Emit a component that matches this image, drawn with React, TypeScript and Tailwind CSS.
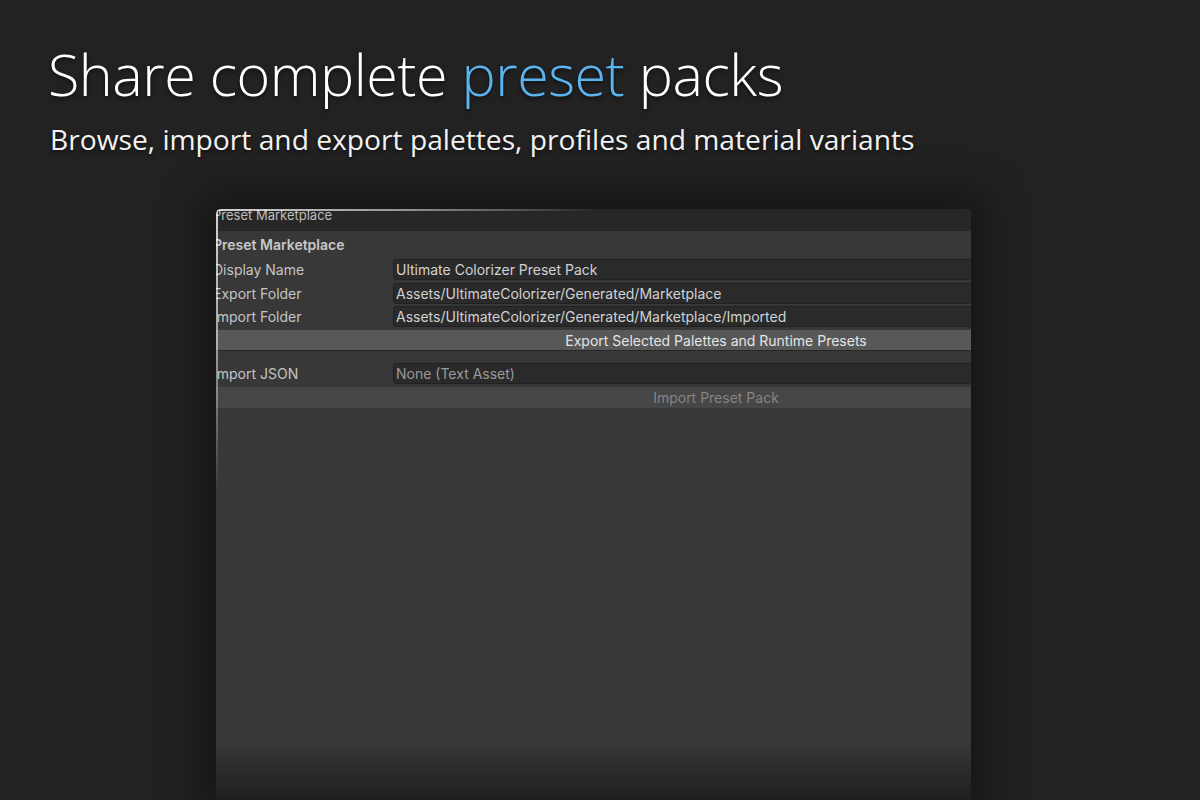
const fields = [
  { label: 'Display Name', value: 'Ultimate Colorizer Preset Pack' },
  { label: 'Export Folder', value: 'Assets/UltimateColorizer/Generated/Marketplace' },
  { label: 'Import Folder', value: 'Assets/UltimateColorizer/Generated/Marketplace/Imported' },
]

function FieldRow({ label, value, dim }: { label: string; value: string; dim?: boolean }) {
  return (
    <div className="flex h-[23.5px] items-center">
      <span className="w-[180px] shrink-0 text-[#c4c4c4]">{label}</span>
      <div
        className={`flex h-[21px] flex-1 items-center rounded-[3px] border border-[#212121] bg-[#2a2a2a] px-[2px] ${
          dim ? 'text-[#9b9b9b]' : 'text-[#d2d2d2]'
        }`}
      >
        {value}
      </div>
    </div>
  )
}

export default function App() {
  return (
    <div className="relative h-[800px] w-[1200px] overflow-hidden bg-[#222222]">
      {/* Heading */}
      <div className="px-[48px] pt-[36px] font-['Open_Sans',sans-serif] text-white [text-shadow:0_2px_4px_rgba(0,0,0,0.6)]">
        <h1 className="text-[57.5px] leading-[76px] font-light tracking-[-0.5px]">
          Share complete <span className="text-[#5ab4f0]">preset</span> packs
        </h1>
        <p className="mt-[7px] pl-[2px] text-[28.2px] leading-[40px] text-[#f2f2f2]">
          Browse, import and export palettes, profiles and material variants
        </p>
      </div>

      {/* Editor window */}
      <div className="relative mt-[50px] ml-[216px] h-[591px] w-[755px] overflow-hidden rounded-t-[5px] bg-[#383838] font-['Inter',sans-serif] text-[14px] shadow-[0_0_40px_18px_rgba(0,0,0,0.35)]">
        {/* title bar */}
        <div className="h-[22px] bg-[#272727] text-[13px] leading-[13px] text-[#bdbdbd]">
          <span className="-ml-[3px] block">Preset Marketplace</span>
        </div>

        <div className="-ml-[3px] w-[1006px]">
          <div className="flex h-[27px] items-center font-semibold text-[#c8c8c8]">Preset Marketplace</div>
          {fields.map((f) => (
            <FieldRow key={f.label} label={f.label} value={f.value} />
          ))}
          <div className="mt-[1.5px] flex h-[21px] items-center justify-center border-b border-[#262626] bg-[#585858] text-[#e4e4e4]">
            Export Selected Palettes and Runtime Presets
          </div>
          <div className="h-[11px]" />
          <FieldRow label="Import JSON" value="None (Text Asset)" dim />
          <div className="mt-[1.5px] flex h-[21px] items-center justify-center bg-[#464646] text-[#858585]">
            Import Preset Pack
          </div>
        </div>

        {/* edge highlights */}
        <div className="pointer-events-none absolute top-0 left-0 h-[285px] w-[1.5px] bg-gradient-to-b from-white/80 via-white/50 to-transparent" />
        <div className="pointer-events-none absolute top-0 left-0 h-[1.5px] w-[380px] bg-gradient-to-r from-white/80 via-white/50 to-transparent" />

        {/* bottom fade */}
        <div className="pointer-events-none absolute bottom-0 left-0 h-[60px] w-full bg-gradient-to-b from-transparent to-[#1f1f1f]" />
      </div>
    </div>
  )
}
